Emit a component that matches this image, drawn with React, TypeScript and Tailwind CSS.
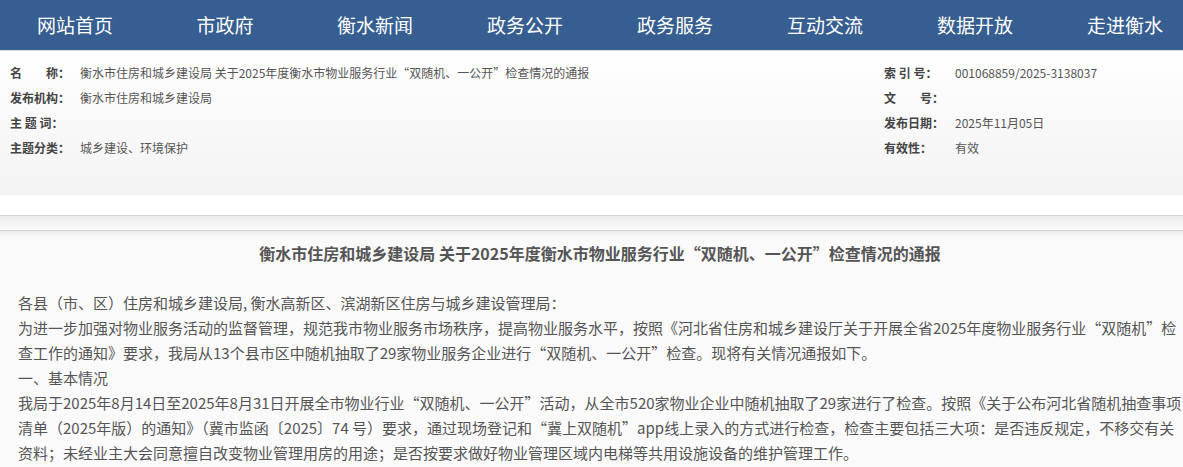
const NAV = ['网站首页', '市政府', '衡水新闻', '政务公开', '政务服务', '互动交流', '数据开放', '走进衡水']

const CJK = { fontFamily: '"Noto Sans CJK SC", "Noto Sans", sans-serif' }

interface Field {
  label: string
  value: string
}

const LEFT: Field[] = [
  { label: '名　　称：', value: '衡水市住房和城乡建设局 关于2025年度衡水市物业服务行业“双随机、一公开”检查情况的通报' },
  { label: '发布机构：', value: '衡水市住房和城乡建设局' },
  { label: '主 题 词：', value: '' },
  { label: '主题分类：', value: '城乡建设、环境保护' },
]

const RIGHT: Field[] = [
  { label: '索 引 号：', value: '001068859/2025-3138037' },
  { label: '文　　号：', value: '' },
  { label: '发布日期：', value: '2025年11月05日' },
  { label: '有效性：', value: '有效' },
]

// full: stretch the line to the column width, like the wrapped lines in the original
const LINES: { text: string; full?: boolean }[] = [
  { text: '各县（市、区）住房和城乡建设局, 衡水高新区、滨湖新区住房与城乡建设管理局：' },
  {
    text: '为进一步加强对物业服务活动的监督管理，规范我市物业服务市场秩序，提高物业服务水平，按照《河北省住房和城乡建设厅关于开展全省2025年度物业服务行业“双随机”检',
    full: true,
  },
  { text: '查工作的通知》要求，我局从13个县市区中随机抽取了29家物业服务企业进行“双随机、一公开”检查。现将有关情况通报如下。' },
  { text: '一、基本情况' },
  {
    text: '我局于2025年8月14日至2025年8月31日开展全市物业行业“双随机、一公开”活动，从全市520家物业企业中随机抽取了29家进行了检查。按照《关于公布河北省随机抽查事项',
    full: true,
  },
  {
    text: '清单（2025年版）的通知》（冀市监函〔2025〕74 号）要求，通过现场登记和“冀上双随机”app线上录入的方式进行检查，检查主要包括三大项：是否违反规定，不移交有关',
    full: true,
  },
  { text: '资料；未经业主大会同意擅自改变物业管理用房的用途；是否按要求做好物业管理区域内电梯等共用设施设备的维护管理工作。' },
]

function FieldRow({ field, labelWidth }: { field: Field; labelWidth: string }) {
  return (
    <div className="flex h-[25px] items-center text-[12px] whitespace-nowrap">
      <span className={`${labelWidth} font-bold text-[#444]`}>{field.label}</span>
      <span className="text-[#555]">{field.value}</span>
    </div>
  )
}

export default function App() {
  return (
    <div className="w-full overflow-hidden bg-white" style={CJK} lang="zh-CN">
      <div className="w-[1200px]">
        {/* Nav */}
        <nav className="flex h-[50px] bg-[#365e91]">
          {NAV.map((item) => (
            <a key={item} className="w-[150px] text-center text-[19px] leading-[50px] text-white">
              {item}
            </a>
          ))}
        </nav>

        {/* Meta info */}
        <div className="flex h-[145px] border-t border-[#dcdcdc] bg-gradient-to-b from-white to-[#f3f3f3] pt-[9px] pl-[10px]">
          <div className="w-[874px]">
            {LEFT.map((f) => (
              <FieldRow key={f.label} field={f} labelWidth="w-[70px]" />
            ))}
          </div>
          <div>
            {RIGHT.map((f) => (
              <FieldRow key={f.label} field={f} labelWidth="w-[71px]" />
            ))}
          </div>
        </div>

        <div className="h-[20px] bg-white" />
        <div className="h-[15px] border-t border-[#d4d4d4] bg-gradient-to-b from-[#ececec] to-[#fafafa]" />

        {/* Article */}
        <div className="border-t border-[#d4d4d4] bg-[linear-gradient(#ececec,#fafafa_6px)] pt-[8px] pb-6">
          <h1 className="text-center text-[16px] leading-[28px] font-bold text-[#555]">
            衡水市住房和城乡建设局 关于2025年度衡水市物业服务行业“双随机、一公开”检查情况的通报
          </h1>
          <div className="mt-[23px] pl-[18px] text-[15px] leading-[25px] text-[#555]">
            {LINES.map((l, i) => (
              <p
                key={i}
                className={
                  l.full
                    ? 'w-[1147px] text-justify whitespace-nowrap [text-align-last:justify]'
                    : 'whitespace-nowrap'
                }
              >
                {l.text}
              </p>
            ))}
          </div>
        </div>
      </div>
    </div>
  )
}
